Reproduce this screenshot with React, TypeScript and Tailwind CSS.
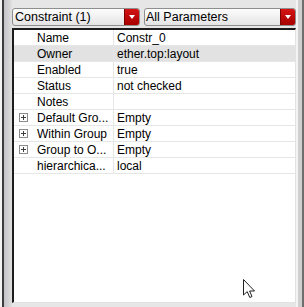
import React from "react";

type Row = { name: string; value: string; expand?: boolean; selected?: boolean };

const rows: Row[] = [
  { name: "Name", value: "Constr_0" },
  { name: "Owner", value: "ether.top:layout", selected: true },
  { name: "Enabled", value: "true" },
  { name: "Status", value: "not checked" },
  { name: "Notes", value: "" },
  { name: "Default Gro...", value: "Empty", expand: true },
  { name: "Within Group", value: "Empty", expand: true },
  { name: "Group to O...", value: "Empty", expand: true },
  { name: "hierarchica...", value: "local" },
];

function Combo({ label, width, pad }: { label: string; width: string; pad: string }) {
  return (
    <div
      className={`${width} h-[18px] flex items-stretch rounded-[3px] border border-[#8e8e8e] bg-gradient-to-b from-[#fdfdfd] to-[#e4e4e4] overflow-hidden`}
    >
      <div className={`flex-1 flex items-center ${pad} text-[12.5px] leading-none text-black whitespace-nowrap overflow-hidden`}>
        {label}
      </div>
      <div className="w-[15px] flex items-center justify-center bg-gradient-to-b from-[#d41414] to-[#a80000] border-l border-[#7a0000]">
        <div className="w-0 h-0 border-l-[3px] border-r-[3px] border-t-[4px] border-l-transparent border-r-transparent border-t-white" />
      </div>
    </div>
  );
}

function Plus() {
  return (
    <svg width="9" height="9" viewBox="0 0 9 9" className="block">
      <rect x="0.5" y="0.5" width="8" height="8" fill="white" stroke="#8a8a8a" />
      <path d="M2 4.5H7M4.5 2V7" stroke="#404040" strokeWidth="1" />
    </svg>
  );
}

export default function App() {
  return (
    <div className="w-[304px] h-[307px] flex bg-[#e6e6e6] relative font-['Liberation_Sans',Arial,sans-serif] text-black overflow-hidden">
      <div className="w-[2px] bg-[#f2f2f2]" />
      <div className="w-[2px] bg-[#3c3c3c]" />
      <div className="w-[8px] bg-gradient-to-r from-[#c2c2c8] to-[#e0e0e0]" />
      <div className="w-[284px] flex flex-col pt-[8px] pb-[4px]">
        <div className="flex gap-[4px] h-[18px]">
          <Combo label="Constraint (1)" width="w-[128px]" pad="pl-[2px]" />
          <Combo label="All Parameters" width="w-[152px]" pad="pl-[1px]" />
        </div>
        <div className="mt-[2px] flex-1 bg-white border-t-2 border-l-2 border-t-[#1c1c1c] border-l-[#1c1c1c] border-r border-b border-r-[#e2e2e2] border-b-[#e2e2e2]">
          {rows.map((r) => (
            <div
              key={r.name}
              className={`h-[16px] flex border-b border-[#e6e6e6] text-[12px] leading-none ${
                r.selected ? "bg-[#e2e2e2]" : "bg-white"
              }`}
            >
              <div className="w-[99px] flex items-center whitespace-nowrap overflow-hidden">
                {r.expand ? (
                  <>
                    <div className="ml-[5px] mr-[9px]">
                      <Plus />
                    </div>
                    <span>{r.name}</span>
                  </>
                ) : (
                  <span className="pl-[23px]">{r.name}</span>
                )}
              </div>
              <div className="flex-1 flex items-center pl-[3px] border-l border-[#e6e6e6] whitespace-nowrap">
                {r.value}
              </div>
            </div>
          ))}
        </div>
      </div>
      <div className="w-[2px] bg-[#f4f4f4]" />
      <div className="w-[4px] bg-[#cfcfcf]" />
      <div className="w-[2px] bg-[#6e6e6e]" />
      <svg
        className="absolute left-[243px] top-[279px]"
        width="13"
        height="20"
        viewBox="0 0 13 20"
      >
        <path
          d="M0.5 0.5 L0.5 16 L4.2 12.6 L6.8 18.5 L9 17.5 L6.6 12 L11.5 12 Z"
          fill="white"
          stroke="#202020"
          strokeWidth="1"
          strokeLinejoin="miter"
        />
      </svg>
    </div>
  );
}
